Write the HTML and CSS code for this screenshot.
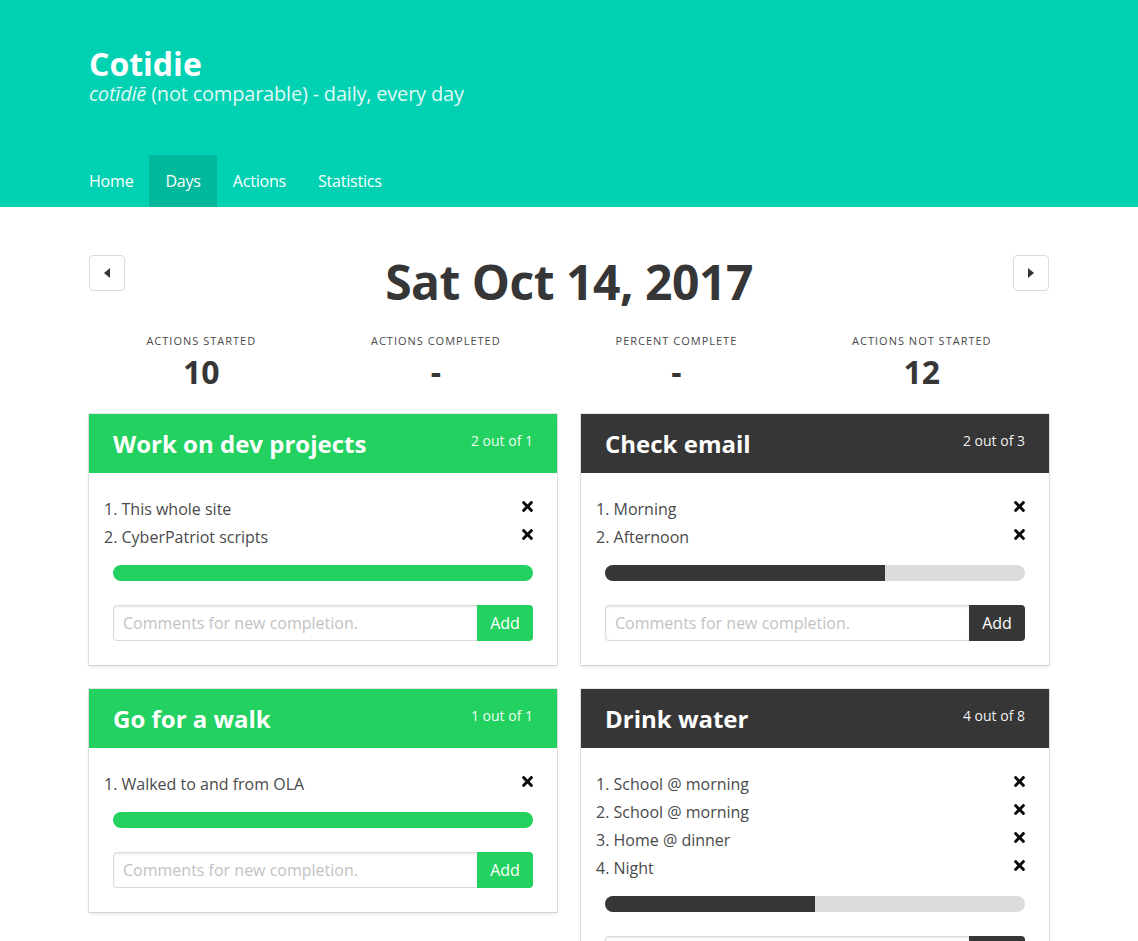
FILE: index.html
```html
<!DOCTYPE html>
<html lang="en">
<head>
<meta charset="utf-8">
<title>Cotidie - Days</title>
<link rel="stylesheet" href="styles.css">
</head>
<body>
<header class="hero">
  <div class="hero-body">
    <div class="container">
      <h1 class="brand">Cotidie</h1>
      <p class="tagline"><em>cotīdiē</em> (not comparable) - daily, every day</p>
    </div>
  </div>
  <nav class="hero-nav">
    <div class="container nav-row">
      <a class="nav-item" href="#">Home</a>
      <a class="nav-item is-active" href="#">Days</a>
      <a class="nav-item" href="#">Actions</a>
      <a class="nav-item" href="#">Statistics</a>
    </div>
  </nav>
</header>

<main class="section">
  <div class="container">
    <div class="date-row">
      <button class="arrow-btn" aria-label="Previous day">
        <svg width="6" height="10" viewBox="0 0 6 10"><path d="M6 0 L0 5 L6 10 Z" fill="#363636"/></svg>
      </button>
      <h2 class="date-title">Sat Oct 14, 2017</h2>
      <button class="arrow-btn" aria-label="Next day">
        <svg width="6" height="10" viewBox="0 0 6 10"><path d="M0 0 L6 5 L0 10 Z" fill="#363636"/></svg>
      </button>
    </div>

    <div class="stats">
      <div class="stat"><p class="stat-label">Actions Started</p><p class="stat-value">10</p></div>
      <div class="stat"><p class="stat-label">Actions Completed</p><p class="stat-value">-</p></div>
      <div class="stat"><p class="stat-label">Percent Complete</p><p class="stat-value">-</p></div>
      <div class="stat"><p class="stat-label">Actions Not Started</p><p class="stat-value">12</p></div>
    </div>

    <div class="cards">
      <div class="card">
        <div class="card-head is-green"><h3 class="card-title">Work on dev projects</h3><span class="card-count">2 out of 1</span></div>
        <div class="card-body">
          <ol class="entries">
            <li><span>1. This whole site</span><svg class="x" viewBox="0 80 352 352"><path d="M242.72 256l100.07-100.07c12.28-12.28 12.28-32.19 0-44.48l-22.24-22.24c-12.28-12.28-32.19-12.28-44.48 0L176 189.28 75.930 89.21c-12.28-12.28-32.19-12.28-44.48 0L9.21 111.45c-12.28 12.28-12.28 32.19 0 44.48L109.28 256 9.21 356.07c-12.28 12.28-12.280 32.19 0 44.48l22.24 22.24c12.28 12.28 32.2 12.28 44.48 0L176 322.72l100.07 100.07c12.28 12.28 32.2 12.28 44.48 0l22.24-22.240c12.28-12.28 12.28-32.19 0-44.48L242.72 256z"/></svg></li>
            <li><span>2. CyberPatriot scripts</span><svg class="x" viewBox="0 80 352 352"><path d="M242.72 256l100.07-100.07c12.28-12.28 12.28-32.19 0-44.48l-22.24-22.24c-12.28-12.28-32.19-12.28-44.48 0L176 189.28 75.930 89.21c-12.28-12.28-32.19-12.28-44.48 0L9.21 111.45c-12.28 12.28-12.28 32.19 0 44.48L109.28 256 9.21 356.07c-12.28 12.28-12.280 32.19 0 44.48l22.24 22.24c12.28 12.28 32.2 12.28 44.48 0L176 322.72l100.07 100.07c12.28 12.28 32.2 12.28 44.48 0l22.24-22.240c12.28-12.28 12.28-32.19 0-44.48L242.72 256z"/></svg></li>
          </ol>
          <div class="progress"><div class="bar is-green" style="width:100%"></div></div>
          <form class="addon"><input class="comment" type="text" placeholder="Comments for new completion."><button class="add-btn is-green" type="button">Add</button></form>
        </div>
      </div>

      <div class="card">
        <div class="card-head is-dark"><h3 class="card-title">Check email</h3><span class="card-count">2 out of 3</span></div>
        <div class="card-body">
          <ol class="entries">
            <li><span>1. Morning</span><svg class="x" viewBox="0 80 352 352"><path d="M242.72 256l100.07-100.07c12.28-12.28 12.28-32.19 0-44.48l-22.24-22.24c-12.28-12.28-32.19-12.28-44.48 0L176 189.28 75.930 89.21c-12.28-12.28-32.19-12.28-44.48 0L9.21 111.45c-12.28 12.28-12.28 32.19 0 44.48L109.28 256 9.21 356.07c-12.28 12.28-12.280 32.19 0 44.48l22.24 22.24c12.28 12.28 32.2 12.28 44.48 0L176 322.72l100.07 100.07c12.28 12.28 32.2 12.28 44.48 0l22.24-22.240c12.28-12.28 12.28-32.19 0-44.48L242.72 256z"/></svg></li>
            <li><span>2. Afternoon</span><svg class="x" viewBox="0 80 352 352"><path d="M242.72 256l100.07-100.07c12.28-12.28 12.28-32.19 0-44.48l-22.24-22.24c-12.28-12.28-32.19-12.28-44.48 0L176 189.28 75.930 89.21c-12.28-12.28-32.19-12.28-44.48 0L9.21 111.45c-12.28 12.28-12.28 32.19 0 44.48L109.28 256 9.21 356.07c-12.28 12.28-12.280 32.19 0 44.48l22.24 22.24c12.28 12.28 32.2 12.28 44.48 0L176 322.72l100.07 100.07c12.28 12.28 32.2 12.28 44.48 0l22.24-22.240c12.28-12.28 12.28-32.19 0-44.48L242.72 256z"/></svg></li>
          </ol>
          <div class="progress"><div class="bar is-dark" style="width:66.6667%"></div></div>
          <form class="addon"><input class="comment" type="text" placeholder="Comments for new completion."><button class="add-btn is-dark" type="button">Add</button></form>
        </div>
      </div>

      <div class="card">
        <div class="card-head is-green"><h3 class="card-title">Go for a walk</h3><span class="card-count">1 out of 1</span></div>
        <div class="card-body">
          <ol class="entries">
            <li><span>1. Walked to and from OLA</span><svg class="x" viewBox="0 80 352 352"><path d="M242.72 256l100.07-100.07c12.28-12.28 12.28-32.19 0-44.48l-22.24-22.24c-12.28-12.28-32.19-12.28-44.48 0L176 189.28 75.930 89.21c-12.28-12.28-32.19-12.28-44.48 0L9.21 111.45c-12.28 12.28-12.28 32.19 0 44.48L109.28 256 9.21 356.07c-12.28 12.28-12.280 32.19 0 44.48l22.24 22.24c12.28 12.28 32.2 12.28 44.48 0L176 322.72l100.07 100.07c12.28 12.28 32.2 12.28 44.48 0l22.24-22.240c12.28-12.28 12.28-32.19 0-44.48L242.72 256z"/></svg></li>
          </ol>
          <div class="progress"><div class="bar is-green" style="width:100%"></div></div>
          <form class="addon"><input class="comment" type="text" placeholder="Comments for new completion."><button class="add-btn is-green" type="button">Add</button></form>
        </div>
      </div>

      <div class="card">
        <div class="card-head is-dark"><h3 class="card-title">Drink water</h3><span class="card-count">4 out of 8</span></div>
        <div class="card-body">
          <ol class="entries">
            <li><span>1. School @ morning</span><svg class="x" viewBox="0 80 352 352"><path d="M242.72 256l100.07-100.07c12.28-12.28 12.28-32.19 0-44.48l-22.24-22.24c-12.28-12.28-32.19-12.28-44.48 0L176 189.28 75.930 89.21c-12.28-12.28-32.19-12.28-44.48 0L9.21 111.45c-12.28 12.28-12.28 32.19 0 44.48L109.28 256 9.21 356.07c-12.28 12.28-12.280 32.19 0 44.48l22.24 22.24c12.28 12.28 32.2 12.28 44.48 0L176 322.72l100.07 100.07c12.28 12.28 32.2 12.28 44.48 0l22.24-22.240c12.28-12.28 12.28-32.19 0-44.48L242.72 256z"/></svg></li>
            <li><span>2. School @ morning</span><svg class="x" viewBox="0 80 352 352"><path d="M242.72 256l100.07-100.07c12.28-12.28 12.28-32.19 0-44.48l-22.24-22.24c-12.28-12.28-32.19-12.28-44.48 0L176 189.28 75.930 89.21c-12.28-12.28-32.19-12.28-44.48 0L9.21 111.45c-12.28 12.28-12.28 32.19 0 44.48L109.28 256 9.21 356.07c-12.28 12.28-12.280 32.19 0 44.48l22.24 22.24c12.28 12.28 32.2 12.28 44.48 0L176 322.72l100.07 100.07c12.28 12.28 32.2 12.28 44.48 0l22.24-22.240c12.28-12.28 12.28-32.19 0-44.48L242.72 256z"/></svg></li>
            <li><span>3. Home @ dinner</span><svg class="x" viewBox="0 80 352 352"><path d="M242.72 256l100.07-100.07c12.28-12.28 12.28-32.19 0-44.48l-22.24-22.24c-12.28-12.28-32.19-12.28-44.48 0L176 189.28 75.930 89.21c-12.28-12.28-32.19-12.28-44.48 0L9.21 111.45c-12.28 12.28-12.28 32.19 0 44.48L109.28 256 9.21 356.07c-12.28 12.28-12.280 32.19 0 44.48l22.24 22.24c12.28 12.28 32.2 12.28 44.48 0L176 322.72l100.07 100.07c12.28 12.28 32.2 12.28 44.48 0l22.24-22.240c12.28-12.28 12.28-32.19 0-44.48L242.72 256z"/></svg></li>
            <li><span>4. Night</span><svg class="x" viewBox="0 80 352 352"><path d="M242.72 256l100.07-100.07c12.28-12.28 12.28-32.19 0-44.48l-22.24-22.24c-12.28-12.28-32.19-12.28-44.48 0L176 189.28 75.930 89.21c-12.28-12.28-32.19-12.28-44.48 0L9.21 111.45c-12.28 12.28-12.28 32.19 0 44.48L109.28 256 9.21 356.07c-12.28 12.28-12.280 32.19 0 44.48l22.24 22.24c12.28 12.28 32.2 12.28 44.48 0L176 322.72l100.07 100.07c12.28 12.28 32.2 12.28 44.48 0l22.24-22.240c12.28-12.28 12.28-32.19 0-44.48L242.72 256z"/></svg></li>
          </ol>
          <div class="progress"><div class="bar is-dark" style="width:50%"></div></div>
          <form class="addon"><input class="comment" type="text" placeholder="Comments for new completion."><button class="add-btn is-dark" type="button">Add</button></form>
        </div>
      </div>
    </div>
  </div>
</main>
</body>
</html>
```

FILE: styles.css
```css
* { box-sizing: border-box; }

html, body {
  margin: 0;
  padding: 0;
  background: #fff;
}

body {
  font-family: "Open Sans", "Noto Sans", "DejaVu Sans", sans-serif;
  font-size: 16px;
  line-height: 1.5;
  color: #4a4a4a;
}

.container {
  width: 960px;
  margin: 0 auto;
}

/* Hero header */
.hero {
  background: #00d1b2;
  color: #fff;
}

.hero-body {
  padding: 47px 0 49px;
}

.brand {
  margin: 0;
  font-size: 32px;
  font-weight: 700;
  line-height: 34px;
  color: #fff;
}

.tagline {
  margin: 0;
  font-size: 20px;
  line-height: 25px;
  letter-spacing: -0.2px;
  color: rgba(255, 255, 255, 0.9);
}

.hero-nav {
  height: 52px;
}

.nav-row {
  display: flex;
  height: 52px;
}

.nav-item {
  display: flex;
  align-items: center;
  padding: 0 16px;
  color: #fff;
  text-decoration: none;
  font-size: 16px;
  letter-spacing: -0.2px;
}

.nav-item:first-child {
  margin-left: -16px;
}

.nav-item.is-active {
  background: #00b89c;
}

/* Main section */
.section {
  padding: 48px 0 0;
}

.date-row {
  display: flex;
  justify-content: space-between;
  align-items: flex-start;
}

.arrow-btn {
  width: 36px;
  height: 36px;
  padding: 0;
  border: 1px solid #dbdbdb;
  border-radius: 4px;
  background: #fff;
  display: flex;
  align-items: center;
  justify-content: center;
}

.date-title {
  margin: 0;
  font-size: 48px;
  line-height: 54px;
  font-weight: 700;
  letter-spacing: -0.5px;
  color: #363636;
}

.stats {
  display: flex;
  margin-top: 24px;
}

.stat {
  flex: 1 1 auto;
  text-align: center;
}

.stat-label {
  margin: 0 0 5px;
  font-size: 11px;
  line-height: 16px;
  letter-spacing: 1px;
  text-transform: uppercase;
  color: #4a4a4a;
}

.stat-value {
  margin: 0;
  font-size: 32px;
  line-height: 36px;
  font-weight: 700;
  color: #363636;
}

/* Cards */
.cards {
  display: grid;
  grid-template-columns: 1fr 1fr;
  gap: 24px;
  align-items: start;
  margin-top: 24px;
}

.card {
  background: #fff;
  box-shadow: 0 2px 3px rgba(10, 10, 10, 0.1), 0 0 0 1px rgba(10, 10, 10, 0.1);
}

.card-head {
  display: flex;
  justify-content: space-between;
  align-items: flex-start;
  padding: 16px 24px;
  color: #fff;
}

.card-head.is-green { background: #23d160; }
.card-head.is-dark { background: #363636; }

.card-title {
  margin: 0;
  font-size: 24px;
  line-height: 27px;
  font-weight: 700;
  color: #fff;
}

.card-count {
  font-size: 14px;
  line-height: 20px;
  margin-top: 1px;
  color: rgba(255, 255, 255, 0.95);
}

.card-body {
  padding: 24px;
}

.entries {
  list-style: none;
  margin: 0 0 16px -9px;
  padding: 0;
}

.entries li {
  display: flex;
  justify-content: space-between;
  align-items: flex-start;
  line-height: 24px;
  margin-bottom: 4px;
}

.entries li:last-child {
  margin-bottom: 0;
}

.x {
  width: 11px;
  height: 11px;
  margin-top: 4px;
  fill: #0a0a0a;
  flex: none;
}

.progress {
  height: 16px;
  border-radius: 8px;
  background: #dbdbdb;
  overflow: hidden;
}

.bar {
  height: 100%;
}

.bar.is-green { background: #23d160; }
.bar.is-dark { background: #363636; }

.addon {
  display: flex;
  margin: 24px 0 0;
}

.comment {
  flex: 1 1 auto;
  height: 36px;
  padding: 0 9px;
  border: 1px solid #dbdbdb;
  border-right: none;
  border-radius: 4px 0 0 4px;
  font: inherit;
  font-size: 16px;
  color: #363636;
  box-shadow: inset 0 1px 2px rgba(10, 10, 10, 0.1);
  outline: none;
}

.comment::placeholder {
  color: #c2c2c2;
}

.add-btn {
  flex: none;
  width: 56px;
  height: 36px;
  border: none;
  border-radius: 0 4px 4px 0;
  font: inherit;
  font-size: 16px;
  color: #fff;
}

.add-btn.is-green { background: #23d160; }
.add-btn.is-dark { background: #363636; }
```
